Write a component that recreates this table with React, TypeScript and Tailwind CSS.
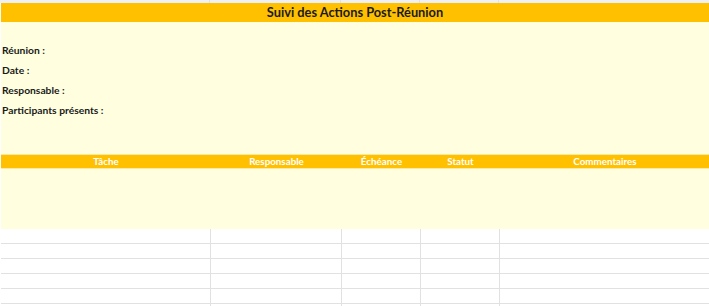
const COLS = [210, 131, 79, 79, 210];
const HEADERS = ["Tâche", "Responsable", "Échéance", "Statut", "Commentaires"];
const INFO = ["Réunion :", "Date :", "Responsable :", "Participants présents :"];
const EMPTY_ROWS = 6;

const gridCols = "grid grid-cols-[210px_131px_79px_79px_210px]";

function GridRow({ height, top = false }: { height: string; top?: boolean }) {
  return (
    <div className={`${gridCols} ${height} ${top ? "bg-[#eef0f5]" : "bg-white"}`}>
      {COLS.map((_, i) => (
        <div
          key={i}
          className={`border-[#e1e1e1] ${i < COLS.length - 1 ? "border-r" : ""} ${top ? "" : "border-b"}`}
        />
      ))}
    </div>
  );
}

export default function App() {
  return (
    <div className="h-[306px] w-[709px] overflow-hidden bg-white font-['Lato','Liberation_Sans',sans-serif]">
      <GridRow height="h-[3px]" top />

      <div className="ml-px flex h-[19px] items-center justify-center bg-[#ffc000] text-[12.8px] font-bold text-[#1a1a1a]">
        Suivi des Actions Post-Réunion
      </div>

      <div className="ml-px h-[132px] bg-[#ffffdf] pt-[18px]">
        {INFO.map((label) => (
          <div key={label} className="h-5 pl-px text-[10.3px] leading-5 font-bold text-[#1a1a1a]">
            {label}
          </div>
        ))}
      </div>

      <div className={`${gridCols} ml-px h-[15px] items-center border-y border-[#ffe9a0] bg-[#ffc000] text-[9.8px] font-bold text-white`}>
        {HEADERS.map((h) => (
          <div key={h} className="text-center leading-none">
            {h}
          </div>
        ))}
      </div>

      <div className="ml-px h-[60px] bg-[#ffffdf]" />

      <div className="ml-px">
        {Array.from({ length: EMPTY_ROWS }).map((_, i) => (
          <GridRow key={i} height="h-[15px]" />
        ))}
      </div>
    </div>
  );
}
